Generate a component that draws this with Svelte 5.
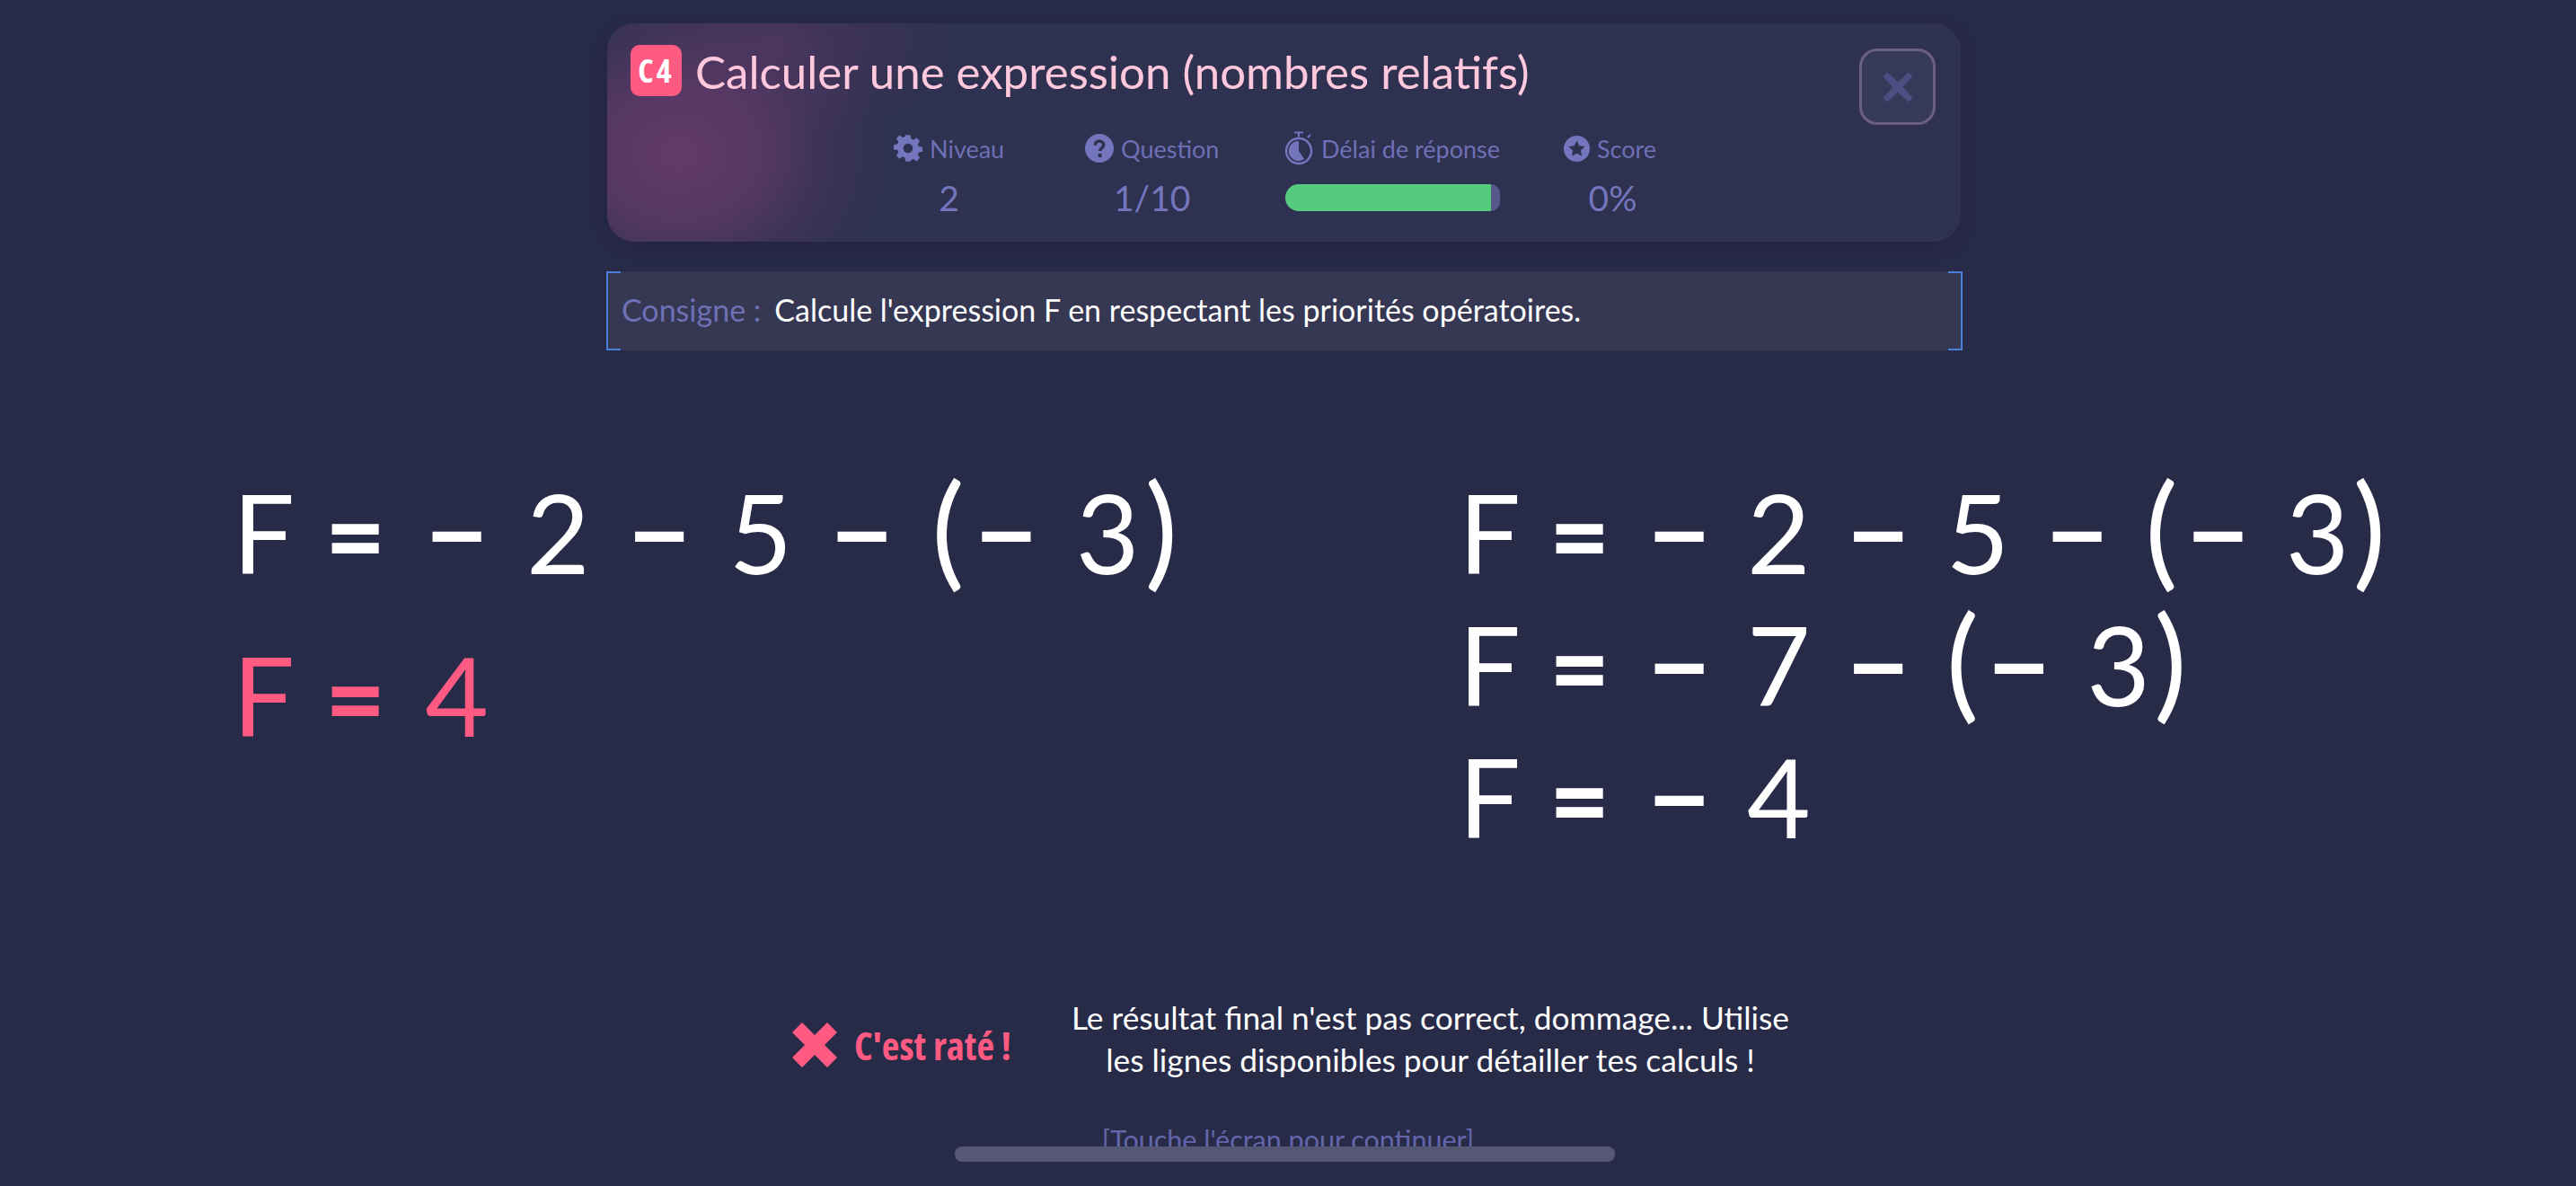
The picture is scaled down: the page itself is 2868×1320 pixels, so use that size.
<script>
const stats = [
	{ label: 'Niveau', icon: 'gear', value: '2' },
	{ label: 'Question', icon: 'help', value: '1/10' },
	{ label: 'Délai de réponse', icon: 'timer', bar: 96 },
	{ label: 'Score', icon: 'star', value: '0%' }
];
const attempt = ['F = − 2 − 5 − ( − 3 )', 'F = 4'];
const solution = ['F = − 2 − 5 − ( − 3 )', 'F = − 7 − ( − 3 )', 'F = − 4'];

function kind(tok) {
	if (tok === '(') return 'open';
	if (tok === ')') return 'close-par';
	if (tok === '=') return 'eq';
	if (tok === '−') return 'op';
	if (tok === 'F') return 'var';
	return '';
}
</script>

{#snippet mathLine(line, cls)}
	<div class="line {cls}">
		{#each line.split(' ') as tok}
			<span class={kind(tok)}>{tok}</span>
		{/each}
	</div>
{/snippet}

<div class="page">
	<header class="card">
		<div class="title-row">
			<span class="badge">C4</span>
			<h1>Calculer une expression (nombres relatifs)</h1>
			<button class="close" aria-label="Fermer">
				<svg viewBox="0 0 24 24" width="44" height="44"><path d="M3 5.500L5.500 3 12 9l6.500-6L21 5.500 15 12l6 6.500-2.500 2.500L12 15l-6.500 6L3 18.500 9 12z" fill="#4d4f83" /></svg>
			</button>
		</div>
		<div class="stats">
			{#each stats as s}
				<div class="stat">
					<div class="label">
						{#if s.icon === 'gear'}
							<svg viewBox="0 0 24 24" width="32" height="32"><path fill="#7476bd" fill-rule="evenodd" d="M10 1h4l.6 3.200 1.900.8 2.700-1.800 2.600 2.800-1.800 2.600.8 1.900 3.200.6v3.800l-3.200.6-.8 1.900 1.800 2.600-2.600 2.800-2.700-1.800-1.900.8L14 23h-4l-.6-3.200-1.900-.8-2.700 1.800-2.600-2.800L4 15.400l-.8-1.900L0 12.900V9.100l3.200-.6.8-1.900-1.800-2.600L4.800 1.200 7.500 3l1.900-.8zM12 8a4 4 0 1 0 0 8 4 4 0 0 0 0-8z" /></svg>
						{:else if s.icon === 'help'}
							<svg viewBox="0 0 24 24" width="32" height="32"><circle cx="12" cy="12" r="12" fill="#7476bd" /><path d="M8.500 9.500c0-2.200 1.500-3.500 3.500-3.500s3.500 1.300 3.500 3.200c0 2.600-3 2.600-3 5" fill="none" stroke="#2f3150" stroke-width="2.600" /><circle cx="12.500" cy="18" r="1.700" fill="#2f3150" /></svg>
						{:else if s.icon === 'timer'}
							<svg viewBox="0 0 32 38" width="32" height="38"><path d="M10 1.500h10M15 1.500v5M25 7l3-3" fill="none" stroke="#7476bd" stroke-width="2.200" /><circle cx="15" cy="22" r="14" fill="none" stroke="#7476bd" stroke-width="2.500" /><path d="M15 22V11a11 11 0 1 0 6 20z" fill="#7476bd" /></svg>
						{:else}
							<svg viewBox="0 0 24 24" width="29" height="29"><circle cx="12" cy="12" r="12" fill="#7476bd" /><path d="M12 4.500l2.300 4.800 5.200.7-3.800 3.600.9 5.200-4.600-2.500-4.600 2.500.9-5.200L4.500 10l5.200-.7z" fill="#2f3150" /></svg>
						{/if}
						<span>{s.label}</span>
					</div>
					{#if s.bar}
						<div class="track"><div class="fill" style="width: {s.bar}%"></div></div>
					{:else}
						<div class="value">{s.value}</div>
					{/if}
				</div>
			{/each}
		</div>
	</header>

	<div class="consigne">
		<span class="c-label">Consigne :</span>
		<span>Calcule l'expression F en respectant les priorités opératoires.</span>
	</div>

	<main class="answers">
		<div class="col left">
			{@render mathLine(attempt[0], '')}
			{@render mathLine(attempt[1], 'wrong')}
		</div>
		<div class="col right">
			{#each solution as l}
				{@render mathLine(l, '')}
			{/each}
		</div>
	</main>

	<section class="feedback">
		<div class="verdict">
			<svg viewBox="0 0 50 50" width="50" height="50"><path d="M0 11L11 0l14 14L39 0l11 11-14 14 14 14-11 11-14-14-14 14L0 39l14-14z" fill="#ff5a82" /></svg>
			<span>C'est raté !</span>
		</div>
		<p>Le résultat final n'est pas correct, dommage... Utilise<br />les lignes disponibles pour détailler tes calculs !</p>
	</section>
	<div class="continue">[Touche l'écran pour continuer]</div>
	<div class="home-bar"></div>
</div>

<style>
	:global(body) { margin: 0; background: #282b48; }
	.page { position: relative; width: 2868px; height: 1320px; overflow: hidden; background: #282b48; font-family: Lato, "Noto Sans", sans-serif; color: #fff; box-sizing: border-box; padding-top: 26px; }
	.card { box-sizing: border-box; width: 1507px; height: 243px; margin-left: 676px; padding: 24px 28px 0 26px; border-radius: 30px; background: radial-gradient(ellipse 230px 190px at 80px 145px, #633a6a 0%, rgba(99, 58, 106, 0.72) 40%, rgba(99, 58, 106, 0.25) 70%, rgba(99, 58, 106, 0) 100%), radial-gradient(ellipse 190px 110px at 190px 20px, rgba(90, 56, 102, 0.55) 0%, rgba(90, 56, 102, 0) 100%), #2f3150; box-shadow: 0 6px 16px rgba(30, 30, 55, 0.5); }
	.title-row { display: flex; align-items: flex-start; height: 93px; }
	.badge { display: flex; align-items: center; justify-content: center; gap: 4px; width: 57px; height: 57px; border-radius: 10px; background: #ff5a82; color: #fff; font-family: "Open Sans", sans-serif; font-stretch: 75%; font-weight: 700; font-size: 36px; letter-spacing: 3px; }
	h1 { margin: 0 0 0 15px; font-size: 51px; line-height: 60px; font-weight: 400; color: #ffc8dc; flex: 1; }
	.close { display: flex; align-items: center; justify-content: center; width: 85px; height: 85px; margin-top: 4px; padding: 0; border: 3px solid #6d5f7f; border-radius: 20px; background: #37395a; }
	.stats { display: grid; grid-template-columns: 213px 223px 310px 107px; margin-left: 293px; }
	.stat { display: flex; flex-direction: column; align-items: center; width: max-content; }
	.stat:last-child .value { margin-left: 6px; }
	.label { display: flex; align-items: center; gap: 8px; height: 44px; font-size: 27px; color: #6e70b5; }
	.value { margin-top: 8px; font-size: 39px; line-height: 50px; color: #7476bd; }
	.track { width: 239px; height: 30px; margin-top: 18px; border-radius: 15px 10px 10px 15px; background: #55578a; overflow: hidden; }
	.fill { height: 100%; background: #55cc7d; }
	.consigne { position: relative; display: flex; gap: 15px; align-items: center; box-sizing: border-box; width: 1510px; height: 88px; margin: 33px 0 0 675px; padding: 0 0 4px 15px; background: #353753; font-size: 34px; border-left: 2px solid #4a7fdc; border-right: 2px solid #4a7fdc; }
	.consigne::before, .consigne::after { content: ''; position: absolute; top: 0; bottom: 0; width: 14px; border-top: 2px solid #4a7fdc; border-bottom: 2px solid #4a7fdc; }
	.consigne::before { left: 0; }
	.consigne::after { right: 0; }
	.c-label { color: #6e70b5; }
	.answers { display: flex; height: 581px; padding-left: 259px; margin-top: 129px; }
	.col { display: flex; flex-direction: column; }
	.left { width: 1365px; }
	.line { display: flex; align-items: baseline; gap: 42px; height: 147px; font-size: 122px; line-height: 147px; white-space: pre; }
	.right .line { gap: 40px; }
	.left .line + .line { margin-top: 34px; }
	.var { margin-right: -8px; }
	.op { font-weight: 700; }
	.eq { font-weight: 900; font-size: 116px; margin-right: 2px; }
	.open, .close-par { font-size: 138px; line-height: 0; }
	.open { margin-right: -31px; }
	.close-par { margin-left: -36px; }
	.wrong { color: #ff5a82; }
	.feedback { display: flex; align-items: center; margin: 9px 0 0 882px; }
	.verdict { display: flex; align-items: center; gap: 19px; width: 311px; padding-top: 14px; }
	.verdict span { font-family: "Open Sans", sans-serif; font-stretch: 75%; font-weight: 700; font-size: 43px; color: #ff5a82; }
	p { margin: 0; font-size: 35.3px; line-height: 47px; text-align: center; }
	.continue { margin-top: 47px; text-align: center; font-size: 30.5px; color: #6466ac; }
	.home-bar { position: absolute; left: 1063px; top: 1276px; width: 735px; height: 17px; border-radius: 8px; background: #555775; }
</style>
